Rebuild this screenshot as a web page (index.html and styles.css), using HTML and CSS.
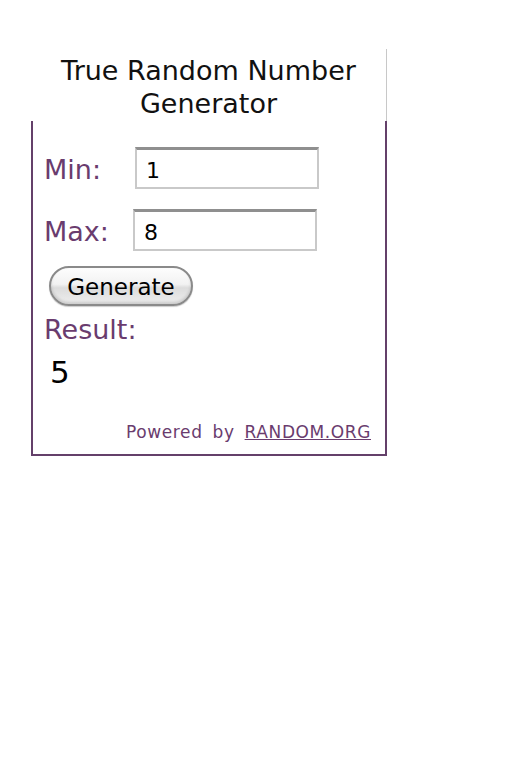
FILE: index.html
```html
<!DOCTYPE html>
<html>
<head>
<meta charset="utf-8">
<link rel="stylesheet" href="styles.css">
</head>
<body>
<div class="widget">
  <div class="title">True Random Number<br>Generator</div>
  <div class="box">
    <div class="row row-min">
      <span class="label">Min:</span>
      <input class="field field-min" type="text" value="1">
    </div>
    <div class="row row-max">
      <span class="label">Max:</span>
      <input class="field" type="text" value="8">
    </div>
    <button class="gen">Generate</button>
    <div class="result-label">Result:</div>
    <div class="result">5</div>
    <div class="powered">Powered by <a href="#">RANDOM.ORG</a></div>
  </div>
</div>
</body>
</html>
```
FILE: styles.css
```css
html, body {
  margin: 0;
  padding: 0;
  background: #fff;
}
body {
  font-family: "DejaVu Sans", Verdana, sans-serif;
}
.widget {
  margin: 49px 0 0 31px;
  width: 356px;
}
.title {
  box-sizing: border-box;
  height: 72px;
  border-right: 1px solid #c8c8c8;
  text-align: center;
  font-size: 27px;
  line-height: 33px;
  color: #111;
  padding-top: 5px;
}
.box {
  box-sizing: border-box;
  height: 335px;
  border: 2px solid #64406a;
  border-top: none;
  padding: 26px 0 0 11px;
  display: flex;
  flex-direction: column;
  align-items: flex-start;
}
.row {
  display: flex;
  align-items: center;
  height: 42px;
}
.row-max {
  margin-top: 20px;
}
.label {
  color: #6a3c6e;
  font-size: 27px;
  padding-top: 3px;
}
.row-min .label { width: 91px; }
.row-max .label { width: 89px; }
.field {
  box-sizing: border-box;
  width: 184px;
  height: 42px;
  margin: 0;
  border: 2px solid #c9c9c9;
  border-top: 3px solid #8f8f8f;
  padding: 3px 0 0 9px;
  font-family: "DejaVu Sans", Verdana, sans-serif;
  font-size: 22px;
  color: #000;
  background: #fff;
  outline: none;
}
.gen {
  margin: 15px 0 0 5px;
  width: 144px;
  height: 40px;
  border-radius: 20px;
  border: 2px solid #8a8a8a;
  background: linear-gradient(#fdfdfd 0%, #f2f2f2 45%, #dcdcdc 55%, #eeeeee 100%);
  box-shadow: inset 0 -2px 3px rgba(0,0,0,0.15), 0 1px 1px rgba(0,0,0,0.2);
  font-family: "DejaVu Sans", Verdana, sans-serif;
  font-size: 23px;
  color: #000;
  padding: 2px 0 0;
}
.result-label {
  margin-top: 9px;
  color: #6a3c6e;
  font-size: 27px;
  line-height: 30px;
}
.result {
  margin: 9px 0 0 6px;
  font-size: 31px;
  line-height: 36px;
  color: #000;
}
.powered {
  align-self: flex-end;
  margin: 32px 14px 0 0;
  font-size: 17px;
  color: #6a3c6e;
  letter-spacing: 0.6px;
  word-spacing: 4px;
}
.powered a {
  color: #6a3c6e;
  text-decoration: underline;
}
```
